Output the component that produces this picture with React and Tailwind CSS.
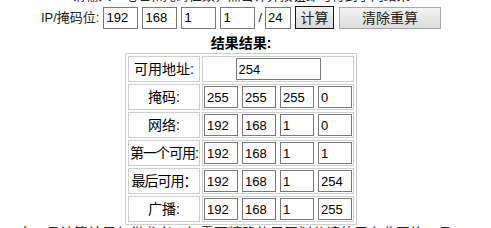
import React from 'react'

const rows = [
  { label: '掩码:', vals: ['255', '255', '255', '0'] },
  { label: '网络:', vals: ['192', '168', '1', '0'] },
  { label: '第一个可用:', vals: ['192', '168', '1', '1'], tight: true },
  { label: '最后可用：', vals: ['192', '168', '1', '254'], tight: true },
  { label: '广播:', vals: ['192', '168', '1', '255'] },
]

function Box({ value, w = 'w-[35px]' }) {
  return (
    <input
      readOnly
      value={value}
      className={`${w} h-[22px] border border-[#7a7a7a] bg-white px-[2px] text-[13px] text-black outline-none`}
    />
  )
}

export default function App() {
  return (
    <div
      className="w-[482px] overflow-hidden bg-white text-black"
      style={{ fontFamily: '"Liberation Sans", "Noto Sans CJK SC", sans-serif' }}
    >
      <div className="-mt-[12px] h-[16px] text-center text-[13px] leading-[16px] text-[#222]">
        请输入IP地址和掩码位数，点击计算按钮即可得到子网结果
      </div>

      <div className="mt-[2px] flex h-[23px] items-center justify-center text-[13px]">
        <span className="mr-[4px] text-[#222]">IP/掩码位:</span>
        <div className="flex gap-[4px]">
          <Box value="192" />
          <Box value="168" />
          <Box value="1" />
          <Box value="1" />
        </div>
        <span className="mx-[3px] text-[#222]">/</span>
        <Box value="24" w="w-[26px]" />
        <button className="ml-[4px] h-[23px] w-[39px] border border-[#1a1a1a] bg-gradient-to-b from-[#f4f4f4] to-[#d8d8d8] text-[14px] leading-none text-[#222]">
          计算
        </button>
        <button className="ml-[5px] h-[22px] w-[102px] border border-[#a8a8a8] bg-gradient-to-b from-[#f4f4f4] to-[#dcdcdc] text-[14px] leading-none text-[#222]">
          清除重算
        </button>
      </div>

      <div className="mt-[6px] text-center text-[14px] font-bold leading-[16px]">结果结果:</div>

      <div className="mt-[2px] flex justify-center">
        <table className="border-separate border-spacing-[2px] border border-[#cfcfcf] text-[14px]">
          <tbody>
            <tr>
              <td className="h-[25px] w-[72px] border border-[#cfcfcf] p-0 text-center leading-none">
                可用地址:
              </td>
              <td className="w-[152px] border border-[#cfcfcf] p-[1px]">
                <div className="flex justify-center">
                  <Box value="254" w="w-[85px]" />
                </div>
              </td>
            </tr>
            {rows.map((r) => (
              <tr key={r.label}>
                <td
                  className={`h-[25px] ${r.tight ? 'tracking-[-1px]' : ''} whitespace-nowrap border border-[#cfcfcf] p-0 text-center leading-none`}
                >
                  {r.label}
                </td>
                <td className="border border-[#cfcfcf] p-[1px]">
                  <div className="flex gap-[4px]">
                    {r.vals.map((v, j) => (
                      <Box key={j} value={v} w="w-[34px]" />
                    ))}
                  </div>
                </td>
              </tr>
            ))}
          </tbody>
        </table>
      </div>

      <div className="h-[16px] pl-[18px] text-[14px] leading-[16px] text-[#222]">
        本工具计算结果仅供参考，如需更精确的子网划分请使用专业网络工具
      </div>
    </div>
  )
}
